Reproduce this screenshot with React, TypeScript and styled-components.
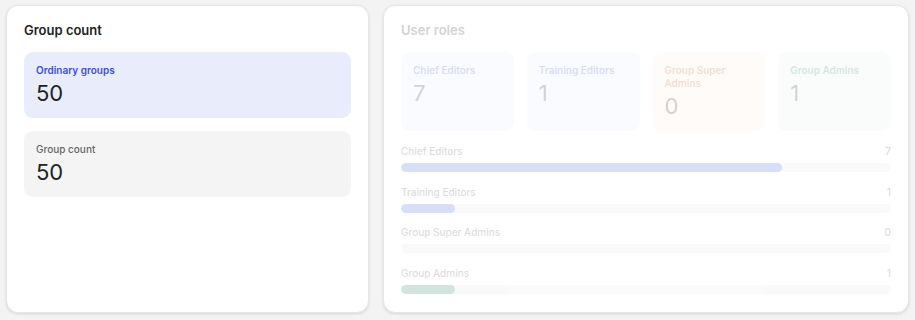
import { FunctionComponent } from "react";
import styled, { createGlobalStyle } from "styled-components";

type Tone = "blue" | "gray" | "orange" | "green";

const tones: Record<Tone, { bg: string; label: string; bar: string }> = {
    blue: { bg: "#e8ecfb", label: "#3d4fd6", bar: "#3c64d7" },
    gray: { bg: "#f4f4f4", label: "#666666", bar: "#888888" },
    orange: { bg: "#fdeee0", label: "#c75a12", bar: "#e07a30" },
    green: { bg: "#e3f1ec", label: "#1e8c5a", bar: "#1e8255" },
};

interface Role {
    name: string;
    count: number;
    tone: Tone;
}

const roles: Role[] = [
    { name: "Chief Editors", count: 7, tone: "blue" },
    { name: "Training Editors", count: 1, tone: "blue" },
    { name: "Group Super Admins", count: 0, tone: "orange" },
    { name: "Group Admins", count: 1, tone: "green" },
];

const total = roles.reduce((sum, r) => sum + r.count, 0);

const App: FunctionComponent = () => {
    return (
        <>
            <GlobalStyle />
            <Page>
                <Card>
                    <Content>
                        <Title>Group count</Title>
                        <StatList>
                            <Stat $tone="blue">
                                <StatLabel $tone="blue" $strong>Ordinary groups</StatLabel>
                                <StatValue>50</StatValue>
                            </Stat>
                            <Stat $tone="gray">
                                <StatLabel $tone="gray">Group count</StatLabel>
                                <StatValue>50</StatValue>
                            </Stat>
                        </StatList>
                    </Content>
                </Card>
                <Card>
                    <Content $faded>
                        <Title>User roles</Title>
                        <StatGrid>
                            {roles.map((r) => (
                                <Stat key={r.name} $tone={r.tone}>
                                    <StatLabel $tone={r.tone} $strong>{r.name}</StatLabel>
                                    <StatValue>{r.count}</StatValue>
                                </Stat>
                            ))}
                        </StatGrid>
                        <Bars>
                            {roles.map((r) => (
                                <BarRow key={r.name}>
                                    <BarHead>
                                        <span>{r.name}</span>
                                        <span>{r.count}</span>
                                    </BarHead>
                                    <Track>
                                        <Fill
                                            $tone={r.tone}
                                            style={{ width: `${(r.count / total) * 100}%` }}
                                        />
                                    </Track>
                                </BarRow>
                            ))}
                        </Bars>
                    </Content>
                </Card>
            </Page>
        </>
    );
};

const GlobalStyle = createGlobalStyle`
    body{
        margin: 0;
        background: #f3f3f3;
        font-family: Inter, "Noto Sans", sans-serif;
        color: #222;
    }
`
const Page = styled.div`
    display: grid;
    grid-template-columns: 363px 1fr;
    gap: 14px;
    padding: 5px 6px 7px 6px;
    height: 308px;
`
const Card = styled.div`
    background: #fff;
    border: 1px solid #e6e6e6;
    border-radius: 12px;
    box-shadow: 0 1px 3px rgba(0,0,0,0.12);
    padding: 14px 17px 17px;
`
const Content = styled.div<{ $faded?: boolean }>`
    display: flex;
    flex-direction: column;
    gap: 12px;
    opacity: ${(p) => (p.$faded ? 0.2 : 1)};
`
const Title = styled.h2`
    margin: 0;
    font-size: 13px;
    line-height: 20px;
    font-weight: 600;
    color: #222;
`
const StatList = styled.div`
    display: flex;
    flex-direction: column;
    gap: 13px;
`
const StatGrid = styled.div`
    display: grid;
    grid-template-columns: repeat(4, 1fr);
    gap: 13px;
`
const Stat = styled.div<{ $tone: Tone }>`
    background: ${(p) => tones[p.$tone].bg};
    border-radius: 9px;
    padding: 12px 12px 10px;
`
const StatLabel = styled.div<{ $tone: Tone; $strong?: boolean }>`
    font-size: 10px;
    line-height: 13px;
    font-weight: ${(p) => (p.$strong ? 600 : 500)};
    color: ${(p) => tones[p.$tone].label};
`
const StatValue = styled.div`
    font-size: 22px;
    line-height: 30px;
    margin-top: 1px;
    font-weight: 400;
    color: #222;
`
const Bars = styled.div`
    display: flex;
    flex-direction: column;
    gap: 11.5px;
`
const BarRow = styled.div`
    display: flex;
    flex-direction: column;
    gap: 4px;
`
const BarHead = styled.div`
    display: flex;
    justify-content: space-between;
    font-size: 10px;
    line-height: 16px;
    font-weight: 500;
    color: #555;
`
const Track = styled.div`
    height: 9px;
    border-radius: 5px;
    background: #e4e4e4;
    overflow: hidden;
`
const Fill = styled.div<{ $tone: Tone }>`
    height: 100%;
    border-radius: 5px;
    background: ${(p) => tones[p.$tone].bar};
`

export default App;
